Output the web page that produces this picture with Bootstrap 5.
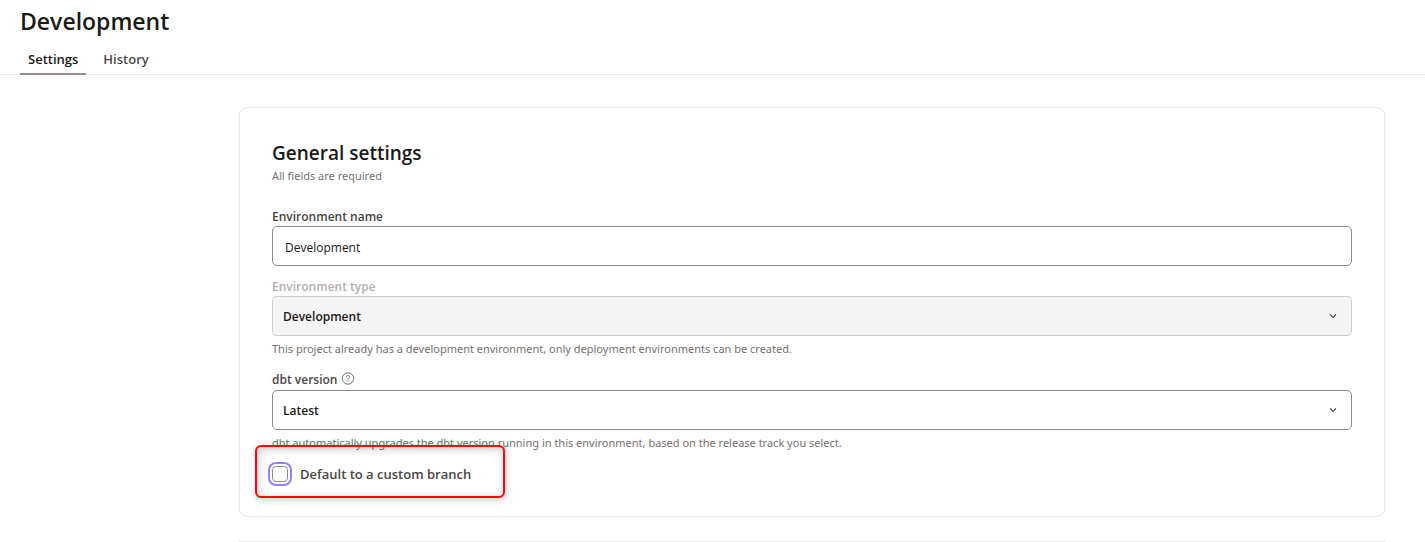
<!DOCTYPE html>
<html lang="en">
<head>
<meta charset="utf-8">
<meta name="viewport" content="width=device-width, initial-scale=1">
<title>Development</title>
<link href="https://cdn.jsdelivr.net/npm/bootstrap@5.3.0/dist/css/bootstrap.min.css" rel="stylesheet">
<style>
  body { font-family: "Open Sans", "Noto Sans", sans-serif; font-size: 13px; line-height: 20px; color: #1b1918; overflow-x: hidden; }
  h1 { font-size: 23px; line-height: 26px; font-weight: 600; }
  h2 { font-size: 19px; line-height: 26px; font-weight: 600; }
  .page-tabs { --bs-nav-tabs-border-color: #e8e8e8; gap: 9px; }
  .page-tabs .nav-link { padding: 7px 8px 4px; border: 0; border-bottom: 2px solid transparent; border-radius: 0; color: #4f4a48; font-weight: 600; line-height: 20px; }
  .page-tabs .nav-link.active { color: #1b1918; background: none; border-bottom-color: #968c8c; }
  .settings-area { padding: 32px 40px 0 239px; }
  .panel { border-color: #e8e8e8; border-radius: 8px; }
  .panel > .card-body { padding: 32px; }
  .hint { font-family: "Noto Sans", sans-serif; font-size: 11px; line-height: 20px; color: #77706d; }
  .form-label { padding-top: 2px; font-size: 12px; line-height: 18px; font-weight: 600; color: #4a4543; }
  .label-off { color: #b5afad; }
  .form-control, .form-select { height: 40px; font-size: 12px; line-height: 20px; border-color: #8f8686; border-radius: 5px; color: #1b1918; }
  .form-control { padding: 10px 12px 8px; }
  .form-select { padding: 10px 36px 8px 10px; font-weight: 600; background-size: 8px 8px; background-position: right 14px center;
    background-image: url("data:image/svg+xml,%3Csvg xmlns='http://www.w3.org/2000/svg' viewBox='0 0 8 8'%3E%3Cpath d='M1 2.3 4 5.5 7 2.3' fill='none' stroke='%23443f3f' stroke-width='1.1'/%3E%3C/svg%3E"); }
  .form-select:disabled { background-color: #f5f5f5; border-color: #cbcbcb; color: #1b1918; opacity: 1; }
  .form-select + .hint { padding-top: 3px; }
  .field-group { margin-top: 10px; }
  .label-row { padding-bottom: 1px; }
  .help-btn { line-height: 0; color: #77706d; }
  .branch-row { margin-top: 11px; gap: 12px; }
  .branch-row .form-check-input { width: 16px; height: 16px; border: 1px solid #8f8686; border-radius: 4px; outline: 2px solid #9381ff; outline-offset: 2px; box-shadow: none; }
  .branch-row label { font-size: 13px; font-weight: 600; color: #4a4543; }
  .callout-frame { left: -17px; top: -19px; width: 250px; height: 53px; border: 2px solid #ff0606; border-radius: 6px; box-shadow: 1px 2px 7px rgba(0,0,0,.2), inset 1px 2px 8px rgba(0,0,0,.22); pointer-events: none; }
</style>
</head>
<body>
<header>
  <h1 class="px-3 ms-1 mb-0 pt-2">Development</h1>
  <ul class="nav nav-tabs page-tabs px-3 pt-2">
    <li class="nav-item ms-1"><a class="nav-link active" aria-current="page" href="#settings">Settings</a></li>
    <li class="nav-item"><a class="nav-link" href="#history">History</a></li>
  </ul>
</header>
<main class="settings-area d-flex flex-column gap-4" id="settings">
  <form class="card panel">
    <div class="card-body">
      <h2 class="mb-0">General settings</h2>
      <p class="hint mb-3 pb-1">All fields are required</p>

      <label class="form-label d-block mb-0" for="envName">Environment name</label>
      <input class="form-control" id="envName" type="text" value="Development">

      <div class="field-group">
        <label class="form-label label-off d-block mb-0" for="envType">Environment type</label>
        <select class="form-select" id="envType" disabled><option>Development</option></select>
        <div class="hint">This project already has a development environment, only deployment environments can be created.</div>
      </div>

      <div class="field-group">
        <div class="label-row d-flex align-items-center gap-1">
          <label class="form-label mb-0" for="dbtVersion">dbt version</label>
          <button class="btn p-0 border-0 help-btn" type="button" aria-label="About dbt version">
            <svg width="14" height="14" viewBox="0 0 14 14" fill="none" stroke="currentColor"><circle cx="7" cy="6.5" r="5.7"/><path d="M5.2 5.2C5.2 3 8.8 3 8.8 5 8.8 6.2 7 6.2 7 7.7M7 8.7v1.1"/></svg>
          </button>
        </div>
        <select class="form-select" id="dbtVersion"><option>Latest</option></select>
        <div class="hint">dbt automatically upgrades the dbt version running in this environment, based on the release track you select.</div>
      </div>

      <div class="branch-row position-relative d-flex align-items-center">
        <input class="form-check-input m-0" type="checkbox" id="customBranch">
        <label for="customBranch">Default to a custom branch</label>
        <span class="callout-frame position-absolute"></span>
      </div>
    </div>
  </form>
  <section class="card panel border-bottom-0"></section>
</main>
<script src="https://cdn.jsdelivr.net/npm/bootstrap@5.3.0/dist/js/bootstrap.bundle.min.js"></script>
</body>
</html>
